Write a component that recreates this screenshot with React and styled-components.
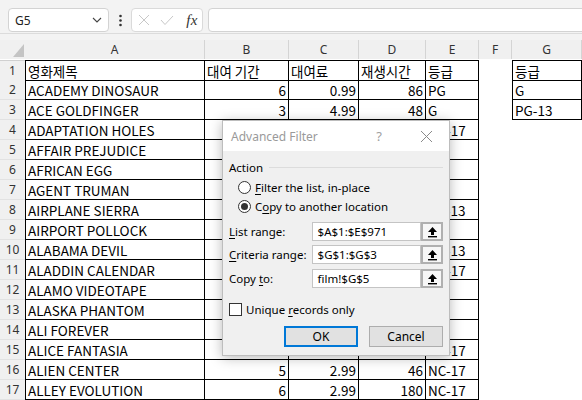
import React from "react";
import styled, { createGlobalStyle } from "styled-components";

const Global = createGlobalStyle`
  html, body { margin: 0; padding: 0; background: #fff; }
  * { box-sizing: border-box; }
`;

const Page = styled.div`
  position: relative;
  width: 582px;
  height: 400px;
  overflow: hidden;
  background: #fff;
  font-family: "Noto Sans", sans-serif;
`;

const Toolbar = styled.div`
  height: 40px;
  background: #f3f3f3;
  display: flex;
  align-items: flex-start;
  padding: 8px 0 0 8px;
  position: relative;
  &::after {
    content: "";
    position: absolute;
    left: 0;
    right: 0;
    top: 33px;
    height: 1px;
    background: #dcdcdc;
  }
`;

const NameBox = styled.div`
  width: 101px;
  height: 24px;
  background: #fff;
  border: 1px solid #d3d3d3;
  border-radius: 4px;
  display: flex;
  align-items: center;
  justify-content: space-between;
  padding: 0 6px 0 6px;
  font-size: 12px;
  color: #222;
`;

const Dots = styled.div`
  width: 22px;
  height: 24px;
  display: flex;
  align-items: center;
  justify-content: center;
`;

const FxBox = styled.div`
  width: 72px;
  height: 24px;
  background: #fff;
  border: 1px solid #dadada;
  border-radius: 4px;
  display: flex;
  align-items: center;
  padding: 0 4px 0 6px;
  gap: 10px;
`;

const Fx = styled.span`
  font-family: "Liberation Serif", serif;
  font-style: italic;
  font-size: 15px;
  color: #333;
  margin-left: auto;
  letter-spacing: 0.5px;
`;

const FormulaInput = styled.div`
  flex: 1;
  height: 24px;
  margin-left: 5px;
  margin-right: -10px;
  background: #fff;
  border: 1px solid #d3d3d3;
  border-radius: 4px;
`;

const Sheet = styled.div`
  display: grid;
  grid-template-columns: 25px 180px 84px 70px 67px 53px 33px 70px;
  grid-auto-rows: 20px;
  font-family: "Noto Sans CJK KR", "Noto Sans", sans-serif;
`;

const ColHead = styled.div`
  height: 19px;
  background: #f0f0f0;
  color: #333;
  font-family: "Noto Sans", sans-serif;
  font-size: 12px;
  display: flex;
  align-items: center;
  justify-content: center;
  border-right: 1px solid #d4d4d4;
  position: relative;
`;

const Corner = styled(ColHead)`
  border-right: none;
  &::after {
    content: "";
    position: absolute;
    right: 1px;
    bottom: 2px;
    width: 0;
    height: 0;
    border-left: 11px solid transparent;
    border-bottom: 13px solid #c4c4c4;
  }
`;

const RowHead = styled.div`
  background: #f0f0f0;
  color: #333;
  font-family: "Noto Sans", sans-serif;
  font-size: 12px;
  display: flex;
  align-items: center;
  justify-content: center;
  border-bottom: 1px solid #e2e2e2;
  height: ${(p) => (p.$first ? 21 : 20)}px;
  ${(p) => (p.$first ? "border-top: 1px solid #d0d0d0;" : "")}
`;

const Cell = styled.div`
  height: ${(p) => (p.$first ? 21 : 20)}px;
  font-size: 13.5px;
  color: #000;
  display: flex;
  align-items: center;
  white-space: nowrap;
  overflow: hidden;
  padding: 0 2px;
  justify-content: ${(p) => (p.$num ? "flex-end" : "flex-start")};
  ${(p) =>
    p.$b
      ? `border-right: 1px solid #000; border-bottom: 1px solid #000;`
      : ""}
  ${(p) => (p.$b && p.$first ? "border-top: 1px solid #000;" : "")}
  ${(p) => (p.$left ? "border-left: 1px solid #000;" : "")}
`;

const Dialog = styled.div`
  position: absolute;
  left: 222px;
  top: 120px;
  width: 228px;
  height: 236px;
  background: #f0f0f0;
  border: 1px solid #bdbdbd;
  box-shadow: 0 2px 12px rgba(0, 0, 0, 0.28);
  font-family: "Noto Sans", sans-serif;
  font-size: 11.5px;
  color: #000;
  display: flex;
  flex-direction: column;
`;

const TitleBar = styled.div`
  height: 30px;
  background: #fff;
  display: flex;
  align-items: center;
  padding: 0 16px 0 8px;
  color: #9a9a9a;
  font-size: 12px;
`;

const Title = styled.span`
  flex: 1;
`;

const Help = styled.span`
  font-size: 13px;
  color: #a0a0a0;
  margin-right: 38px;
`;

const Body = styled.div`
  padding: 7px 6px 0 6px;
  display: flex;
  flex-direction: column;
`;

const Legend = styled.div`
  display: flex;
  align-items: center;
  gap: 6px;
  height: 18px;
  &::after {
    content: "";
    flex: 1;
    height: 1px;
    background: #dcdcdc;
  }
`;

const RadioRow = styled.div`
  display: flex;
  align-items: center;
  gap: 4px;
  height: 19px;
  padding-left: 9px;
  margin-top: ${(p) => p.$mt || 0}px;
`;

const RadioDot = styled.span`
  width: 13px;
  height: 13px;
  border-radius: 50%;
  border: 1px solid #333;
  background: #fff;
  display: flex;
  align-items: center;
  justify-content: center;
  &::after {
    content: "";
    width: 7px;
    height: 7px;
    border-radius: 50%;
    background: ${(p) => (p.$on ? "#333" : "transparent")};
  }
`;

const U = styled.span`
  text-decoration: underline;
  text-underline-offset: 2px;
`;

const FieldRow = styled.div`
  display: flex;
  align-items: center;
  height: 19px;
  margin-top: ${(p) => p.$mt}px;
`;

const FieldLabel = styled.span`
  width: 83px;
`;

const FieldInput = styled.div`
  width: 110px;
  height: 19px;
  background: #fff;
  border: 1px solid #c4c4c4;
  display: flex;
  align-items: center;
  padding-left: 5px;
`;

const PickBtn = styled.div`
  width: 22px;
  height: 19px;
  background: #f7f7f7;
  border: 2px solid #b0b0b0;
  display: flex;
  align-items: center;
  justify-content: center;
`;

const CheckRow = styled.div`
  display: flex;
  align-items: center;
  gap: 4px;
  margin-top: 14px;
  height: 14px;
`;

const Box = styled.span`
  width: 13px;
  height: 13px;
  border: 1px solid #333;
  background: #fff;
`;

const Buttons = styled.div`
  display: flex;
  justify-content: flex-end;
  gap: 11px;
  margin-top: 10px;
`;

const Btn = styled.div`
  width: 74px;
  height: 21px;
  background: #e1e1e1;
  border: ${(p) => (p.$primary ? "2px solid #0078d7" : "1px solid #adadad")};
  display: flex;
  align-items: center;
  justify-content: center;
  font-size: 12px;
`;

const rows = [
  ["영화제목", "대여 기간", "대여료", "재생시간", "등급", "", "등급"],
  ["ACADEMY DINOSAUR", 6, "0.99", 86, "PG", "", "G"],
  ["ACE GOLDFINGER", 3, "4.99", 48, "G", "", "PG-13"],
  ["ADAPTATION HOLES", 7, "2.99", 50, "NC-17"],
  ["AFFAIR PREJUDICE", 5, "2.99", 117, "G"],
  ["AFRICAN EGG", 6, "2.99", 130, "G"],
  ["AGENT TRUMAN", 3, "2.99", 169, "PG"],
  ["AIRPLANE SIERRA", 6, "4.99", 62, "PG-13"],
  ["AIRPORT POLLOCK", 6, "4.99", 54, "R"],
  ["ALABAMA DEVIL", 3, "2.99", 114, "PG-13"],
  ["ALADDIN CALENDAR", 6, "4.99", 63, "NC-17"],
  ["ALAMO VIDEOTAPE", 6, "0.99", 126, "G"],
  ["ALASKA PHANTOM", 6, "0.99", 136, "PG"],
  ["ALI FOREVER", 4, "4.99", 150, "PG"],
  ["ALICE FANTASIA", 6, "0.99", 94, "NC-17"],
  ["ALIEN CENTER", 5, "2.99", 46, "NC-17"],
  ["ALLEY EVOLUTION", 6, "2.99", 180, "NC-17"],
];

const cols = ["A", "B", "C", "D", "E", "F", "G"];

const UpIcon = () => (
  <svg width="11" height="12" viewBox="0 0 11 12">
    <path d="M5.5 1 L10 6 L7 6 L7 9 L4 9 L4 6 L1 6 Z" fill="#000" />
    <rect x="1" y="10" width="9" height="1.4" fill="#000" />
  </svg>
);

const Field = ({ mt, label, value }) => (
  <FieldRow $mt={mt}>
    <FieldLabel>{label}</FieldLabel>
    <FieldInput>{value}</FieldInput>
    <PickBtn>
      <UpIcon />
    </PickBtn>
  </FieldRow>
);

export default function App() {
  return (
    <Page>
      <Global />
      <Toolbar>
        <NameBox>
          <span>G5</span>
          <svg width="10" height="6" viewBox="0 0 10 6">
            <path d="M1 1 L5 5 L9 1" fill="none" stroke="#444" strokeWidth="1.1" />
          </svg>
        </NameBox>
        <Dots>
          <svg width="3" height="13" viewBox="0 0 3 13">
            <circle cx="1.5" cy="2" r="1.3" fill="#333" />
            <circle cx="1.5" cy="6.5" r="1.3" fill="#333" />
            <circle cx="1.5" cy="11" r="1.3" fill="#333" />
          </svg>
        </Dots>
        <FxBox>
          <svg width="12" height="12" viewBox="0 0 12 12">
            <path d="M1 1 L11 11 M11 1 L1 11" stroke="#c8c8c8" strokeWidth="1" />
          </svg>
          <svg width="14" height="11" viewBox="0 0 14 11">
            <path d="M1 5 L5 9.5 L13 1" fill="none" stroke="#c8c8c8" strokeWidth="1" />
          </svg>
          <Fx>fx</Fx>
        </FxBox>
        <FormulaInput />
      </Toolbar>
      <Sheet>
        <Corner />
        {cols.map((c) => (
          <ColHead key={c}>{c}</ColHead>
        ))}
        {rows.map((r, i) => {
          const first = i === 0;
          return (
            <React.Fragment key={i}>
              <RowHead $first={first}>{i + 1}</RowHead>
              {cols.map((c, j) => {
                const v = r[j] ?? "";
                const bordered = j <= 4 || (j === 6 && i <= 2);
                const num = typeof v === "number" || (j === 2 && !first);
                return (
                  <Cell
                    key={c}
                    $first={first}
                    $b={bordered}
                    $left={j === 0 || (j === 6 && i <= 2)}
                    $num={num}
                  >
                    {v}
                  </Cell>
                );
              })}
            </React.Fragment>
          );
        })}
      </Sheet>
      <Dialog>
        <TitleBar>
          <Title>Advanced Filter</Title>
          <Help>?</Help>
          <svg width="13" height="13" viewBox="0 0 13 13">
            <path d="M1 1 L12 12 M12 1 L1 12" stroke="#8a8a8a" strokeWidth="1" />
          </svg>
        </TitleBar>
        <Body>
          <Legend>Action</Legend>
          <RadioRow $mt={2}>
            <RadioDot />
            <span>
              <U>F</U>ilter the list, in-place
            </span>
          </RadioRow>
          <RadioRow>
            <RadioDot $on />
            <span>
              C<U>o</U>py to another location
            </span>
          </RadioRow>
          <Field
            mt={6}
            label={
              <>
                <U>L</U>ist range:
              </>
            }
            value="$A$1:$E$971"
          />
          <Field
            mt={4}
            label={
              <>
                <U>C</U>riteria range:
              </>
            }
            value="$G$1:$G$3"
          />
          <Field
            mt={5}
            label={
              <>
                Copy <U>t</U>o:
              </>
            }
            value="film!$G$5"
          />
          <CheckRow>
            <Box />
            <span>
              Unique <U>r</U>ecords only
            </span>
          </CheckRow>
          <Buttons>
            <Btn $primary>OK</Btn>
            <Btn>Cancel</Btn>
          </Buttons>
        </Body>
      </Dialog>
    </Page>
  );
}
